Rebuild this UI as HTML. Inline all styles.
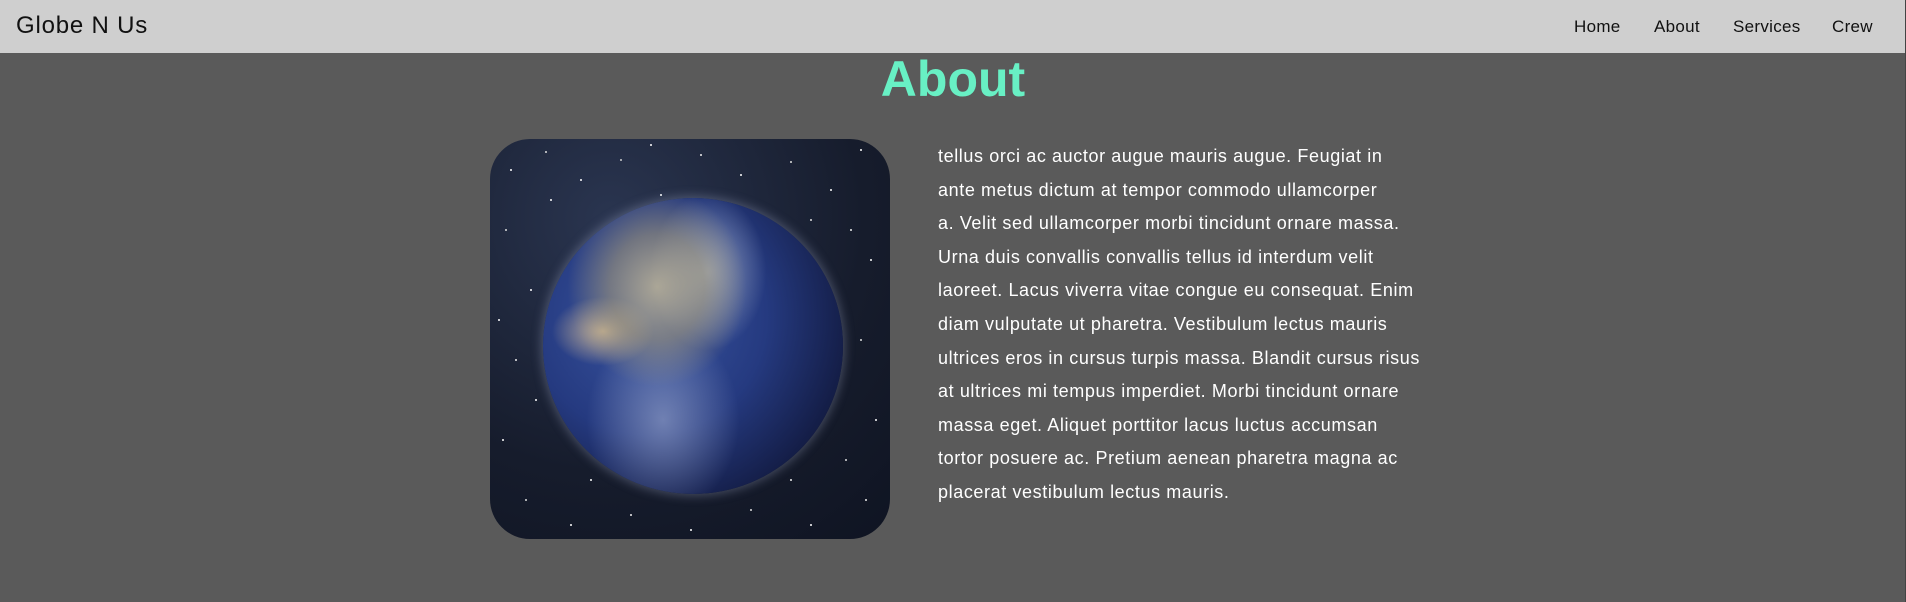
<!DOCTYPE html>
<html><head><meta charset="utf-8"><style>
*{margin:0;padding:0;box-sizing:border-box}
html,body{width:1906px;height:602px;overflow:hidden}
body{background:#5a5a5a;font-family:"Liberation Sans",sans-serif;position:relative;border-right:1px solid #444}
nav{position:absolute;left:0;top:0;width:1905px;height:53px;background:#cfcfcf}
.logo{position:absolute;left:16px;top:12px;font-size:24px;color:#111;letter-spacing:0.8px}
.link{position:absolute;top:17px;font-size:17px;color:#111;letter-spacing:0.3px}
h1{position:absolute;left:0;width:1906px;text-align:center;top:50px;font-size:50px;color:#68f0c4;font-weight:bold}
.img{position:absolute;left:490px;top:139px;width:400px;height:400px;border-radius:40px;overflow:hidden;
background:radial-gradient(circle at 30% 20%,#2a3550 0,#161c2c 60%,#0f1422 100%)}
.stars{position:absolute;left:0;top:0;width:2px;height:2px;border-radius:50%;background:#fff}
.earth{position:absolute;left:53px;top:59px;width:300px;height:296px;border-radius:50%;
background:
radial-gradient(ellipse at 38% 30%,rgba(190,180,150,.85) 0,rgba(160,150,120,.6) 18%,transparent 34%),
radial-gradient(ellipse at 20% 45%,rgba(230,200,150,.8) 0,transparent 15%),
radial-gradient(ellipse at 55% 25%,rgba(220,225,225,.6) 0,transparent 25%),
radial-gradient(ellipse at 40% 75%,rgba(200,210,235,.45) 0,transparent 30%),
radial-gradient(circle at 35% 40%,#3a55a0 0,#253a80 45%,#121a40 80%,#0a0e20 100%);
box-shadow:0 0 10px 2px rgba(160,170,200,.35)}
p{position:absolute;left:938px;top:140px;width:520px;font-size:18px;letter-spacing:0.6px;line-height:33.6px;color:#fff;white-space:nowrap}
</style></head><body>
<nav><div class="logo">Globe N Us</div>
<div class="link" style="left:1574px">Home</div>
<div class="link" style="left:1654px">About</div>
<div class="link" style="left:1733px">Services</div>
<div class="link" style="left:1832px">Crew</div></nav>
<h1>About</h1>
<div class="img"><div class="stars" style="box-shadow:20px 30px #fff,55px 12px #ddd,90px 40px #fff,130px 20px #ccc,170px 55px #fff,210px 15px #eee,250px 35px #fff,300px 22px #ddd,340px 50px #fff,370px 10px #fff,15px 90px #ddd,40px 150px #fff,25px 220px #eee,12px 300px #fff,35px 360px #ddd,80px 385px #fff,140px 375px #eee,200px 390px #fff,260px 370px #ddd,320px 385px #fff,375px 360px #eee,385px 280px #fff,370px 200px #ddd,380px 120px #fff,360px 90px #eee,60px 60px #fff,320px 80px #ddd,100px 340px #fff,300px 340px #eee,160px 5px #fff,230px 70px #ddd,45px 260px #fff,355px 320px #ddd,8px 180px #fff"></div>
<div class="earth"></div></div>
<p>tellus orci ac auctor augue mauris augue. Feugiat in<br>ante metus dictum at tempor commodo ullamcorper<br>a. Velit sed ullamcorper morbi tincidunt ornare massa.<br>Urna duis convallis convallis tellus id interdum velit<br>laoreet. Lacus viverra vitae congue eu consequat. Enim<br>diam vulputate ut pharetra. Vestibulum lectus mauris<br>ultrices eros in cursus turpis massa. Blandit cursus risus<br>at ultrices mi tempus imperdiet. Morbi tincidunt ornare<br>massa eget. Aliquet porttitor lacus luctus accumsan<br>tortor posuere ac. Pretium aenean pharetra magna ac<br>placerat vestibulum lectus mauris.</p>
</body></html>
